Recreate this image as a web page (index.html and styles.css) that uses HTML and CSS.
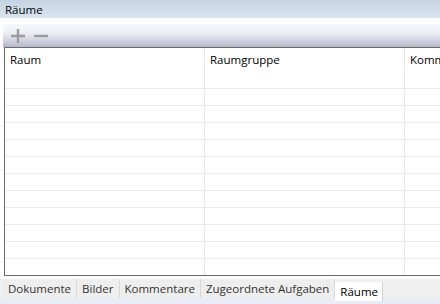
FILE: index.html
```html
<!DOCTYPE html>
<html>
<head>
<meta http-equiv="Content-Type" content="text/html; charset=UTF-8">
<title>Räume</title>
<link rel="stylesheet" href="styles.css">
</head>
<body>
<div class="titlebar">Räume</div>
<div class="panel">
<div class="toolbar">
<svg class="tool" width="16" height="14" viewBox="0 0 16 14"><path d="M1 7H15M8 0V14" stroke="#9c9c9c" stroke-width="2.4" fill="none"/></svg>
<svg class="tool" width="16" height="14" viewBox="0 0 16 14"><path d="M1 7H15" stroke="#9c9c9c" stroke-width="2.4" fill="none"/></svg>
</div>
<div class="grid">
<div class="row head">
<div class="cell">Raum</div>
<div class="cell">Raumgruppe</div>
<div class="cell">Kommentar</div>
</div>
<div class="row"><div class="cell"></div><div class="cell"></div><div class="cell"></div></div>
<div class="row"><div class="cell"></div><div class="cell"></div><div class="cell"></div></div>
<div class="row"><div class="cell"></div><div class="cell"></div><div class="cell"></div></div>
<div class="row"><div class="cell"></div><div class="cell"></div><div class="cell"></div></div>
<div class="row"><div class="cell"></div><div class="cell"></div><div class="cell"></div></div>
<div class="row"><div class="cell"></div><div class="cell"></div><div class="cell"></div></div>
<div class="row"><div class="cell"></div><div class="cell"></div><div class="cell"></div></div>
<div class="row"><div class="cell"></div><div class="cell"></div><div class="cell"></div></div>
<div class="row"><div class="cell"></div><div class="cell"></div><div class="cell"></div></div>
<div class="row"><div class="cell"></div><div class="cell"></div><div class="cell"></div></div>
<div class="row"><div class="cell"></div><div class="cell"></div><div class="cell"></div></div>
<div class="row last"><div class="cell"></div><div class="cell"></div><div class="cell"></div></div>
</div>
</div>
<div class="tabs">
<div class="tab">Dokumente</div>
<div class="tab">Bilder</div>
<div class="tab">Kommentare</div>
<div class="tab">Zugeordnete Aufgaben</div>
<div class="tab active">Räume</div>
</div>
</body>
</html>
```
FILE: styles.css
```css
html, body {
	margin: 0;
	padding: 0;
}
body {
	width: 440px;
	height: 304px;
	overflow: hidden;
	background: #ffffff;
	font-family: "Open Sans", "Noto Sans", sans-serif;
	font-size: 11.5px;
	color: #000;
}
.titlebar {
	height: 18px;
	line-height: 19px;
	padding-left: 5px;
	background: linear-gradient(#c6d3e1, #d8e4f0);
}
.panel {
	margin: 6px 0 0 3px;
	width: 700px;
}
.toolbar {
	height: 23px;
	display: flex;
	align-items: center;
	gap: 7px;
	padding-left: 7px;
	background: linear-gradient(#f7f8fc, #eceef5 40%, #b6b9ca);
}
.grid {
	margin-left: 1px;
	border-top: 1px solid #6a6a6a;
	border-left: 1px solid #6a6a6a;
	border-bottom: 1px solid #6a6a6a;
}
.row {
	display: flex;
	height: 16px;
	border-bottom: 1px solid #ececec;
}
.row.head {
	height: 24px;
	border-bottom: none;
}
.row.last {
	border-bottom: none;
}
.cell {
	flex: none;
	width: 200px;
	box-sizing: border-box;
	padding-left: 5px;
	border-right: 1px solid #e8e8e8;
	white-space: nowrap;
	overflow: hidden;
}
.head .cell {
	line-height: 24px;
}
.tabs {
	margin-top: 3px;
	height: 27px;
	display: flex;
	align-items: flex-start;
	padding-left: 3px;
	background: linear-gradient(#f0f0f0 19px, #e9ebf6 19px);
}
.tab {
	height: 19px;
	line-height: 20px;
	padding: 0 5px;
	background: #eeeeee;
	border-right: 1px solid #d8d8d8;
	color: #333;
}
.tab.active {
	margin-top: 3px;
	padding: 0 4px 0 5px;
	background: #ffffff;
	border-right: 1px solid #d0d0d0;
	color: #000;
}
```
